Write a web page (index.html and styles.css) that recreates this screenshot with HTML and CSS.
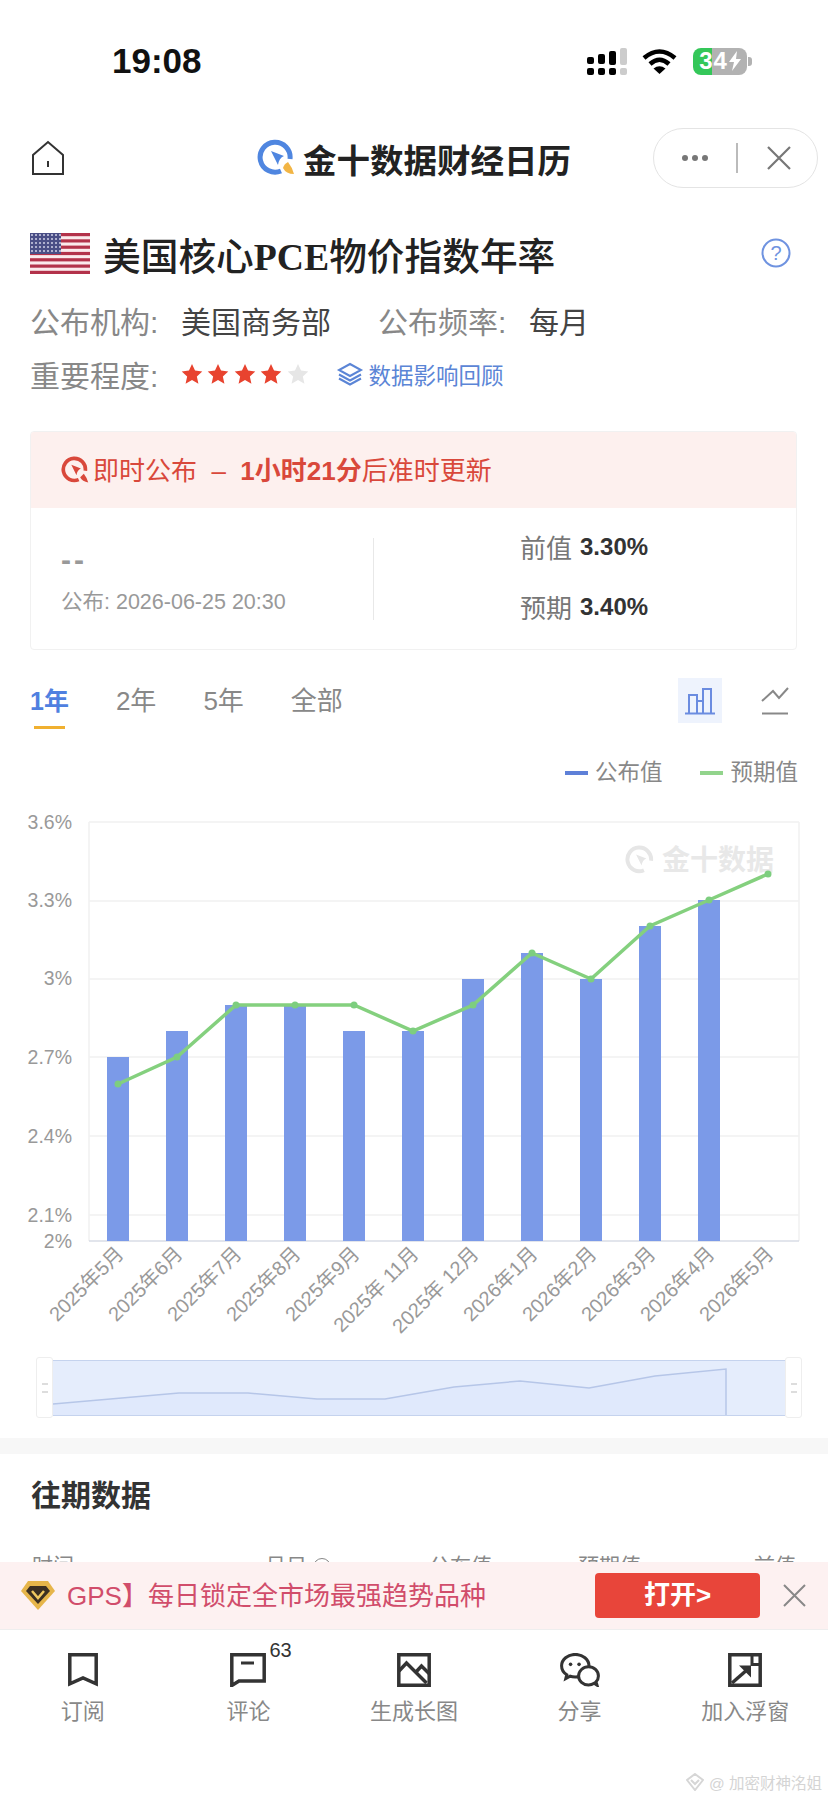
FILE: index.html
```html
<!DOCTYPE html>
<html lang="zh-CN">
<head>
    <meta charset="UTF-8">
    <meta name="viewport" content="width=device-width, initial-scale=1.0">
    <title>美国核心PCE物价指数年率</title>
    <link rel="stylesheet" href="styles.css">
</head>
<body>
    <svg class="defs" width="0" height="0">
        <symbol id="ring" viewBox="0 0 38 38">
            <path d="M33 20A15 15 0 1 0 24 32" fill="none" stroke="currentColor" stroke-width="5"/>
            <path d="M14 12L27 17Q22 19 21 26Z" fill="currentColor"/>
        </symbol>
        <symbol id="star" viewBox="0 0 24 24">
            <path d="M12 1l3.3 7.3 7.9.9-5.9 5.4 1.7 7.9L12 18.5l-7 4 1.7-7.9L.8 9.2l7.9-.9z"/>
        </symbol>
    </svg>

    <div class="page">
        <!-- status bar -->
        <div class="status">
            <span class="clock">19:08</span>
            <div class="status-icons">
                <svg width="40" height="27" viewBox="0 0 40 27" fill="#000">
                    <rect x="0" y="9" width="7" height="7" rx="2"/><rect x="0" y="20" width="7" height="7" rx="2"/>
                    <rect x="11" y="6" width="7" height="10" rx="2"/><rect x="11" y="20" width="7" height="7" rx="2"/>
                    <rect x="22" y="3" width="7" height="14" rx="2"/><rect x="22" y="20" width="7" height="7" rx="2"/>
                    <rect x="33" y="0" width="7" height="17" rx="2" fill="#ccc"/><rect x="33" y="20" width="7" height="7" rx="2" fill="#ccc"/>
                </svg>
                <svg width="36" height="26" viewBox="0 0 36 26">
                    <path d="M2 10Q17.500 -3 33 10" fill="none" stroke="#000" stroke-width="4.500"/>
                    <path d="M8 16Q17.500 7.500 27 16" fill="none" stroke="#000" stroke-width="4.500"/>
                    <path d="M11.500 20.500Q17.500 16 23.500 20.500L17.500 26Z"/>
                </svg>
                <div class="battery-wrap">
                    <div class="battery">
                        <span>34</span>
                        <svg width="12" height="20" viewBox="0 0 12 20" fill="#fff"><path d="M8 0L0 11h5l-2 9 9-12H7z"/></svg>
                    </div>
                    <i class="battery-nub"></i>
                </div>
            </div>
        </div>

        <!-- nav -->
        <div class="nav">
            <svg class="home" width="34" height="36" viewBox="0 0 34 36" fill="none" stroke="#333" stroke-width="2">
                <path d="M2 34V15L17 2l15 13v19z"/>
                <path d="M17 21v6"/>
            </svg>
            <div class="nav-title">
                <svg class="nav-logo" width="38" height="38" viewBox="0 0 38 38">
                    <use href="#ring"/>
                    <path d="M31 23Q35 28 37 35Q29 35 26 29Q27 25 31 23Z" fill="#f2b544"/>
                </svg>
                <span>金十数据财经日历</span>
            </div>
            <div class="capsule">
                <div class="capsule-dots"><i></i><i></i><i></i></div>
                <i class="capsule-line"></i>
                <svg width="26" height="26" viewBox="0 0 26 26" stroke="#777" stroke-width="2.200"><path d="M2 2l22 22M24 2L2 24"/></svg>
            </div>
        </div>

        <!-- indicator info -->
        <div class="info">
            <div class="info-title">
                <svg class="flag" width="60" height="41" viewBox="0 0 60 41">
                    <defs>
                        <pattern id="us-stars" width="4" height="4" patternUnits="userSpaceOnUse"><circle cx="2" cy="2" r="1" fill="#cfd0e6"/></pattern>
                    </defs>
                    <rect width="60" height="41" fill="#fbeaec"/>
                    <g fill="#b3324a">
                        <rect y="0" width="60" height="3.200"/><rect y="6.300" width="60" height="3.200"/><rect y="12.600" width="60" height="3.200"/>
                        <rect y="18.900" width="60" height="3.200"/><rect y="25.200" width="60" height="3.200"/><rect y="31.500" width="60" height="3.200"/><rect y="37.800" width="60" height="3.200"/>
                    </g>
                    <rect width="31" height="21" fill="#4a4f86"/>
                    <rect width="31" height="21" fill="url(#us-stars)"/>
                </svg>
                <h1>美国核心<b>PCE</b>物价指数年率</h1>
                <svg class="help" width="30" height="30" viewBox="0 0 30 30">
                    <circle cx="15" cy="15" r="13.500" fill="none" stroke="#6f93e0" stroke-width="2"/>
                    <text x="15" y="22" text-anchor="middle" class="help-mark">?</text>
                </svg>
            </div>
            <div class="meta-row meta-first">
                <span class="meta-label">公布机构:</span><span class="meta-value">美国商务部</span>
                <span class="meta-label meta-gap">公布频率:</span><span class="meta-value">每月</span>
            </div>
            <div class="meta-row meta-second">
                <span class="meta-label">重要程度:</span>
                <div class="stars">
                    <svg width="22" height="22"><use href="#star"/></svg>
                    <svg width="22" height="22"><use href="#star"/></svg>
                    <svg width="22" height="22"><use href="#star"/></svg>
                    <svg width="22" height="22"><use href="#star"/></svg>
                    <svg class="star-off" width="22" height="22"><use href="#star"/></svg>
                </div>
                <a class="impact">
                    <svg width="28" height="24" viewBox="0 0 28 24" fill="none" stroke="#5b85d6" stroke-width="2">
                        <path d="M14 2l11 6-11 6L3 8z"/>
                        <path d="M3 12.500l11 6 11-6"/>
                        <path d="M3 16.500l11 6 11-6"/>
                    </svg>
                    <span>数据影响回顾</span>
                </a>
            </div>
        </div>

        <!-- release card -->
        <div class="card">
            <div class="card-head">
                <svg width="28" height="28" viewBox="0 0 38 38">
                    <use href="#ring"/>
                    <path d="M31 24Q35 29 37 36Q29 35 26 29Z" fill="currentColor"/>
                </svg>
                <span class="card-head-text">即时公布 &nbsp;–&nbsp; <b>1小时21分</b>后准时更新</span>
            </div>
            <div class="card-body">
                <div class="card-left">
                    <div class="card-dash">--</div>
                    <div class="card-time">公布: 2026-06-25 20:30</div>
                </div>
                <div class="card-right">
                    <div class="card-stat"><span>前值</span><b>3.30%</b></div>
                    <div class="card-stat"><span>预期</span><b>3.40%</b></div>
                </div>
            </div>
        </div>

        <!-- range tabs -->
        <div class="tabs">
            <span class="tab tab-active">1年</span>
            <span class="tab">2年</span>
            <span class="tab">5年</span>
            <span class="tab">全部</span>
            <div class="chart-types">
                <div class="chart-type chart-type-active">
                    <svg width="32" height="28" viewBox="0 0 32 28" fill="none" stroke="#6b8ce0" stroke-width="2">
                        <path d="M1 26.500h30"/>
                        <path d="M5 26.500V8h8v18.500M13 26.500V14h6v12.500M19 26.500V2h8v24.500"/>
                    </svg>
                </div>
                <div class="chart-type">
                    <svg width="28" height="28" viewBox="0 0 28 28" fill="none" stroke="#888" stroke-width="2">
                        <path d="M1 26.500h26"/>
                        <path d="M1 14L12 4l6 7L27 1"/>
                    </svg>
                </div>
            </div>
        </div>

        <div class="legend">
            <i class="legend-mark legend-pub"></i><span>公布值</span>
            <i class="legend-mark legend-exp"></i><span>预期值</span>
        </div>

        <!-- chart, drawn in page coordinates -->
        <svg class="chart" width="828" height="545" viewBox="0 791 828 545">
            <g stroke="#f1f1f1" stroke-width="1.500">
                <path d="M89 822H799M89 901H799M89 979H799M89 1057H799M89 1136H799M89 1215H799"/>
                <path d="M89 822V1241M799 822V1241"/>
            </g>
            <path d="M89 1241H799" stroke="#d8dce6" stroke-width="1.500"/>
            <g class="axis-y" text-anchor="end">
                <text x="72" y="829">3.6%</text>
                <text x="72" y="907">3.3%</text>
                <text x="72" y="985">3%</text>
                <text x="72" y="1064">2.7%</text>
                <text x="72" y="1143">2.4%</text>
                <text x="72" y="1222">2.1%</text>
                <text x="72" y="1248">2%</text>
            </g>
            <svg x="625" y="845" width="30" height="30" viewBox="0 0 38 38" class="mark-logo"><use href="#ring"/></svg>
            <text x="662" y="870" class="mark-text">金十数据</text>
            <g fill="#7b9ae8">
                <rect x="107" y="1057" width="22" height="184"/>
                <rect x="166" y="1031" width="22" height="210"/>
                <rect x="225" y="1005" width="22" height="236"/>
                <rect x="284" y="1005" width="22" height="236"/>
                <rect x="343" y="1031" width="22" height="210"/>
                <rect x="402" y="1031" width="22" height="210"/>
                <rect x="462" y="979" width="22" height="262"/>
                <rect x="521" y="953" width="22" height="288"/>
                <rect x="580" y="979" width="22" height="262"/>
                <rect x="639" y="926" width="22" height="315"/>
                <rect x="698" y="900" width="22" height="341"/>
            </g>
            <polyline fill="none" stroke="#84d07e" stroke-width="3.500" points="118,1084 177,1057 236,1005 295,1005 354,1005 413,1031 473,1005 532,953 591,979 650,926 709,900 768,874"/>
            <g fill="#7dce7f">
                <circle cx="118" cy="1084" r="3.500"/><circle cx="177" cy="1057" r="3.500"/><circle cx="236" cy="1005" r="3.500"/>
                <circle cx="295" cy="1005" r="3.500"/><circle cx="354" cy="1005" r="3.500"/><circle cx="413" cy="1031" r="3.500"/>
                <circle cx="473" cy="1005" r="3.500"/><circle cx="532" cy="953" r="3.500"/><circle cx="591" cy="979" r="3.500"/>
                <circle cx="650" cy="926" r="3.500"/><circle cx="709" cy="900" r="3.500"/><circle cx="768" cy="874" r="3.500"/>
            </g>
            <g class="axis-x" text-anchor="end">
                <text transform="translate(125 1255) rotate(-45)">2025年5月</text>
                <text transform="translate(184 1255) rotate(-45)">2025年6月</text>
                <text transform="translate(243 1255) rotate(-45)">2025年7月</text>
                <text transform="translate(302 1255) rotate(-45)">2025年8月</text>
                <text transform="translate(361 1255) rotate(-45)">2025年9月</text>
                <text transform="translate(420 1255) rotate(-45)">2025年 11月</text>
                <text transform="translate(480 1255) rotate(-45)">2025年 12月</text>
                <text transform="translate(539 1255) rotate(-45)">2026年1月</text>
                <text transform="translate(598 1255) rotate(-45)">2026年2月</text>
                <text transform="translate(657 1255) rotate(-45)">2026年3月</text>
                <text transform="translate(716 1255) rotate(-45)">2026年4月</text>
                <text transform="translate(775 1255) rotate(-45)">2026年5月</text>
            </g>
        </svg>

        <!-- range slider -->
        <div class="slider">
            <div class="slider-handle"><i></i><i></i></div>
            <div class="slider-track">
                <svg width="732" height="56" viewBox="0 0 732 56">
                    <path d="M0 45L126 34H195L264 40H332L401 28 467 22 536 29 602 17 673 10V56H0Z" fill="#e0e9fc"/>
                    <path d="M0 45L126 34H195L264 40H332L401 28 467 22 536 29 602 17 673 10V56" fill="none" stroke="#b6c6e8" stroke-width="1.500"/>
                </svg>
            </div>
            <div class="slider-handle"><i></i><i></i></div>
        </div>

        <div class="band"></div>

        <!-- history table, cut by the banner -->
        <div class="history">
            <h2>往期数据</h2>
            <div class="history-head">
                <span>时间</span>
                <span>月日 <i class="history-tip"></i></span>
                <span>公布值</span>
                <span>预期值</span>
                <span>前值</span>
            </div>
        </div>

        <!-- ad banner -->
        <div class="banner">
            <svg width="34" height="29" viewBox="0 0 34 29">
                <path d="M7 0H27L34 10 17 29 0 10Z" fill="#e6b54a"/>
                <path d="M9 5H25L29 10 17 23 5 10Z" fill="#3b2f22"/>
                <path d="M11 10l6 7 6-7" fill="none" stroke="#f0c860" stroke-width="2.500"/>
            </svg>
            <span class="banner-text">GPS】每日锁定全市场最强趋势品种</span>
            <a class="banner-btn">打开&gt;</a>
            <svg class="banner-close" width="23" height="23" viewBox="0 0 23 23" stroke="#888" stroke-width="2"><path d="M1 1l21 21M22 1L1 22"/></svg>
        </div>

        <!-- bottom actions -->
        <div class="actions">
            <div class="action">
                <svg width="30" height="34" viewBox="0 0 30 34" fill="none" stroke="#333" stroke-width="3.500"><path d="M1.800 1.800h26.400v29L15 25 1.800 30.800z"/></svg>
                <span>订阅</span>
            </div>
            <div class="action">
                <div class="action-icon">
                    <svg width="36" height="34" viewBox="0 0 36 34" fill="none" stroke="#333" stroke-width="3.500">
                        <path d="M1.800 1.800h32.400V28H9l-7.200 4.500z"/>
                        <path d="M11 10h13" stroke-width="3"/>
                    </svg>
                    <span class="action-count">63</span>
                </div>
                <span>评论</span>
            </div>
            <div class="action">
                <svg width="34" height="34" viewBox="0 0 34 34" fill="none" stroke="#333" stroke-width="3.500">
                    <path d="M1.800 1.800h30.400v30.400H1.800z"/>
                    <path d="M2 18L9.500 10l20 20"/>
                    <path d="M19 19l5.500-6 8 8"/>
                </svg>
                <span>生成长图</span>
            </div>
            <div class="action">
                <svg width="42" height="36" viewBox="0 0 42 36" fill="none" stroke="#333" stroke-width="3.200">
                    <path d="M7 23C3 20.500 1.500 17 1.500 13.500 1.500 7 8 1.500 16 1.500S30.500 7 30.500 13.500 24 25.500 16 25.500c-2 0-4-.300-5.500-1L6 27z"/>
                    <path d="M36 32c-1.500 1-3.500 1.800-6 1.800-5.800 0-10.500-4.300-10.500-9.500S24.200 14.500 30 14.500s10.500 4.400 10.500 9.800c0 2.500-1 4.600-2.500 6.200l1 3.500z" fill="#fff"/>
                    <circle cx="11" cy="12" r="1.900" fill="#333" stroke="none"/>
                    <circle cx="20" cy="12" r="1.900" fill="#333" stroke="none"/>
                </svg>
                <span>分享</span>
            </div>
            <div class="action">
                <svg width="34" height="34" viewBox="0 0 34 34" fill="none" stroke="#333" stroke-width="3.500">
                    <path d="M1.800 1.800h30.400v30.400H1.800z"/>
                    <path d="M24 2v9.500h8" stroke-width="3"/>
                    <path d="M4 30l16-14" stroke-width="3.500"/>
                    <path d="M11 12.500h12v12z" fill="#333" stroke="none"/>
                </svg>
                <span>加入浮窗</span>
            </div>
        </div>

        <!-- repost watermark -->
        <div class="repost">
            <svg width="18" height="18" viewBox="0 0 18 18" fill="none" stroke="#d6d6d6" stroke-width="2"><path d="M9 1l8 6-8 10L1 7z"/><path d="M5 7l4 4 4-4"/></svg>
            <span>@ 加密财神洺姐</span>
        </div>
    </div>
</body>
</html>
```

FILE: styles.css
```css
html, body {
    margin: 0;
    padding: 0;
    background: #fff;
}

body {
    font-family: "Liberation Sans", "Noto Sans CJK SC", sans-serif;
    color: #333;
}

i {
    font-style: normal;
}

.defs {
    position: absolute;
}

.page {
    position: relative;
    width: 828px;
    height: 1799px;
    overflow: hidden;
    background: #fff;
}

/* status bar */
.status {
    height: 122px;
    display: flex;
    align-items: center;
    justify-content: space-between;
    padding: 0 76px 0 112px;
    box-sizing: border-box;
}

.clock {
    font-size: 35px;
    font-weight: 700;
    color: #111;
}

.status-icons {
    display: flex;
    align-items: center;
    gap: 15px;
}

.battery-wrap {
    display: flex;
    align-items: center;
    gap: 1px;
}

.battery {
    width: 54px;
    height: 27px;
    border-radius: 8px;
    background: linear-gradient(90deg, #34c759 0, #34c759 36%, #b2b2b2 36%, #b2b2b2 100%);
    display: flex;
    align-items: center;
    justify-content: center;
    gap: 1px;
    color: #fff;
    font-size: 24px;
    font-weight: 700;
    letter-spacing: 1px;
}

.battery-nub {
    display: block;
    width: 4px;
    height: 9px;
    border-radius: 0 3px 3px 0;
    background: #b2b2b2;
}

/* nav */
.nav {
    height: 72px;
    display: grid;
    grid-template-columns: 1fr auto 1fr;
    align-items: center;
    padding: 0 10px;
}

.home {
    margin-left: 21px;
}

.nav-title {
    display: flex;
    align-items: center;
    gap: 8px;
    font-size: 33.500px;
    font-weight: 700;
    color: #222;
}

.nav-logo {
    color: #4f86e0;
}

.capsule {
    justify-self: end;
    width: 165px;
    height: 60px;
    box-sizing: border-box;
    border: 1.5px solid #e4e4e4;
    border-radius: 30px;
    display: flex;
    align-items: center;
    padding-left: 28px;
}

.capsule-dots {
    display: flex;
    gap: 4px;
}

.capsule-dots i {
    display: block;
    width: 6px;
    height: 6px;
    border-radius: 50%;
    background: #777;
}

.capsule-line {
    display: block;
    width: 1.5px;
    height: 30px;
    background: #bbb;
    margin: 0 28px;
}

/* indicator info */
.info {
    padding: 36px 30px 0;
}

.info-title {
    height: 46px;
    display: flex;
    align-items: center;
    gap: 13px;
}

.info-title h1 {
    margin: 0;
    flex: 1;
    font-family: "Liberation Serif", "Noto Sans CJK SC", serif;
    font-size: 37.700px;
    font-weight: 500;
    color: #222;
}

.info-title h1 b {
    font-weight: 700;
}

.help {
    margin-right: 7px;
}

.help-mark {
    font-size: 20px;
    fill: #6f93e0;
}

.meta-row {
    height: 40px;
    display: flex;
    align-items: center;
    font-size: 30px;
}

.meta-first {
    margin-top: 24px;
}

.meta-second {
    margin-top: 14px;
}

.meta-label {
    width: 151px;
    color: #888;
}

.meta-value {
    color: #444;
}

.meta-gap {
    margin-left: 47px;
}

.stars {
    display: flex;
    gap: 4.400px;
    fill: #e8432f;
}

.star-off {
    fill: #e6e6e6;
}

.impact {
    display: flex;
    align-items: center;
    gap: 5px;
    margin-left: 27px;
    font-size: 22.500px;
    color: #5b85d6;
}

/* release card */
.card {
    margin: 37px 31px 0 30px;
    height: 219px;
    box-sizing: border-box;
    border: 1px solid #f1f1f1;
    border-radius: 4px;
    overflow: hidden;
}

.card-head {
    height: 76px;
    display: flex;
    align-items: center;
    gap: 4px;
    padding-left: 30px;
    background: #fdf0ee;
    color: #d9483b;
    font-size: 26px;
}

.card-head-text {
    margin-bottom: 4px;
}

.card-head-text b {
    font-weight: 700;
}

.card-body {
    display: flex;
    align-items: center;
    height: 141px;
}

.card-left {
    width: 343px;
    height: 82px;
    box-sizing: border-box;
    padding-left: 30px;
    border-right: 1px solid #e8e8e8;
}

.card-dash {
    height: 51px;
    line-height: 44px;
    font-size: 30px;
    font-weight: 700;
    letter-spacing: 3px;
    color: #999;
}

.card-time {
    font-size: 21.500px;
    line-height: 26px;
    color: #999;
}

.card-right {
    padding: 0 0 4px 146px;
    display: flex;
    flex-direction: column;
    gap: 24px;
}

.card-stat {
    display: flex;
    align-items: center;
    gap: 8px;
    height: 36px;
    font-size: 26px;
    color: #777;
}

.card-stat b {
    font-size: 24px;
    color: #333;
}

/* range tabs */
.tabs {
    margin-top: 28px;
    padding: 0 31px 0 30px;
    height: 51px;
    display: flex;
    align-items: flex-start;
    gap: 47px;
}

.tab {
    line-height: 47px;
    font-size: 26px;
    color: #888;
}

.tab-active {
    font-weight: 700;
    color: #4f80e0;
    font-size: 25px;
}

.tab-active::after {
    content: "";
    display: block;
    width: 31px;
    height: 3px;
    margin: 1px auto 0;
    background: #f0b030;
}

.chart-types {
    margin-left: auto;
    display: flex;
    gap: 31px;
}

.chart-type {
    width: 44px;
    height: 45px;
    display: flex;
    align-items: center;
    justify-content: center;
}

.chart-type-active {
    background: #eef3fd;
}

/* legend */
.legend {
    margin-top: 28px;
    height: 34px;
    padding-right: 30px;
    display: flex;
    align-items: flex-start;
    justify-content: flex-end;
    font-size: 22.500px;
    line-height: 32px;
    color: #888;
}

.legend-mark {
    display: block;
    width: 23px;
    height: 4px;
    margin: 14px 7px 0 0;
}

.legend-pub {
    background: #5e80d8;
}

.legend-exp {
    background: #92d48c;
    margin-left: 38px;
}

/* chart */
.chart {
    display: block;
}

.axis-y text {
    font-size: 19.500px;
    fill: #999;
}

.axis-x text {
    font-size: 20px;
    fill: #999;
}

.mark-logo {
    color: #e6e6e6;
}

.mark-text {
    font-size: 28px;
    font-weight: 700;
    fill: #e8e8e8;
}

/* range slider */
.slider {
    margin: 21px 26px 0 36px;
    height: 61px;
    display: flex;
    align-items: center;
}

.slider-handle {
    width: 17px;
    height: 61px;
    box-sizing: border-box;
    border: 1.500px solid #eeeeee;
    border-radius: 3px;
    background: #fff;
    display: flex;
    flex-direction: column;
    align-items: center;
    justify-content: center;
    gap: 6px;
}

.slider-handle i {
    display: block;
    width: 6px;
    height: 2px;
    background: #ddd;
}

.slider-track {
    flex: 1;
    height: 56px;
    box-sizing: border-box;
    border: 1.500px solid #c5d3ee;
    border-width: 1.500px 0;
    background: #e5edfc;
    overflow: hidden;
}

.slider-track svg {
    display: block;
    margin-top: -1.500px;
}

.band {
    margin-top: 20px;
    height: 16px;
    background: #f7f7f7;
}

/* history */
.history {
    height: 108px;
    overflow: hidden;
    padding: 26px 31px 0;
    box-sizing: border-box;
}

.history h2 {
    margin: 0;
    height: 32px;
    line-height: 32px;
    font-size: 30px;
    font-weight: 700;
    color: #333;
}

.history-head {
    margin-top: 41px;
    margin-left: 1px;
    display: grid;
    grid-template-columns: 233px 164px 149px 176px auto;
    line-height: 26px;
    font-size: 21px;
    color: #888;
}

.history-tip {
    display: inline-block;
    width: 18px;
    height: 18px;
    box-sizing: border-box;
    border: 1.500px solid #888;
    border-radius: 50%;
    vertical-align: middle;
}

/* ad banner */
.banner {
    height: 68px;
    box-sizing: border-box;
    border-bottom: 1px solid #eeeeee;
    background: #fdf1f1;
    display: flex;
    align-items: center;
    padding: 0 22px 0 21px;
}

.banner-text {
    margin: 0 0 5px 12px;
    font-size: 26px;
    color: #d14d6b;
}

.banner-btn {
    margin-left: auto;
    width: 165px;
    height: 45px;
    line-height: 45px;
    border-radius: 4px;
    background: #e8453a;
    color: #fff;
    text-align: center;
    font-size: 26px;
    font-weight: 700;
}

.banner-close {
    margin-left: 23px;
}

/* bottom actions */
.actions {
    display: flex;
    padding-top: 23px;
}

.action {
    flex: 1;
    display: flex;
    flex-direction: column;
    align-items: center;
    font-size: 22px;
    color: #888;
}

.action > svg,
.action-icon {
    height: 34px;
}

.action > span {
    margin-top: 13px;
    line-height: 24px;
}

.action-icon {
    position: relative;
}

.action-count {
    position: absolute;
    left: 39px;
    top: -14px;
    font-size: 20px;
    color: #333;
}

/* repost watermark */
.repost {
    position: absolute;
    right: 6px;
    bottom: 6px;
    display: flex;
    align-items: center;
    gap: 5px;
    font-size: 15.500px;
    color: #d4d4d4;
}
```
